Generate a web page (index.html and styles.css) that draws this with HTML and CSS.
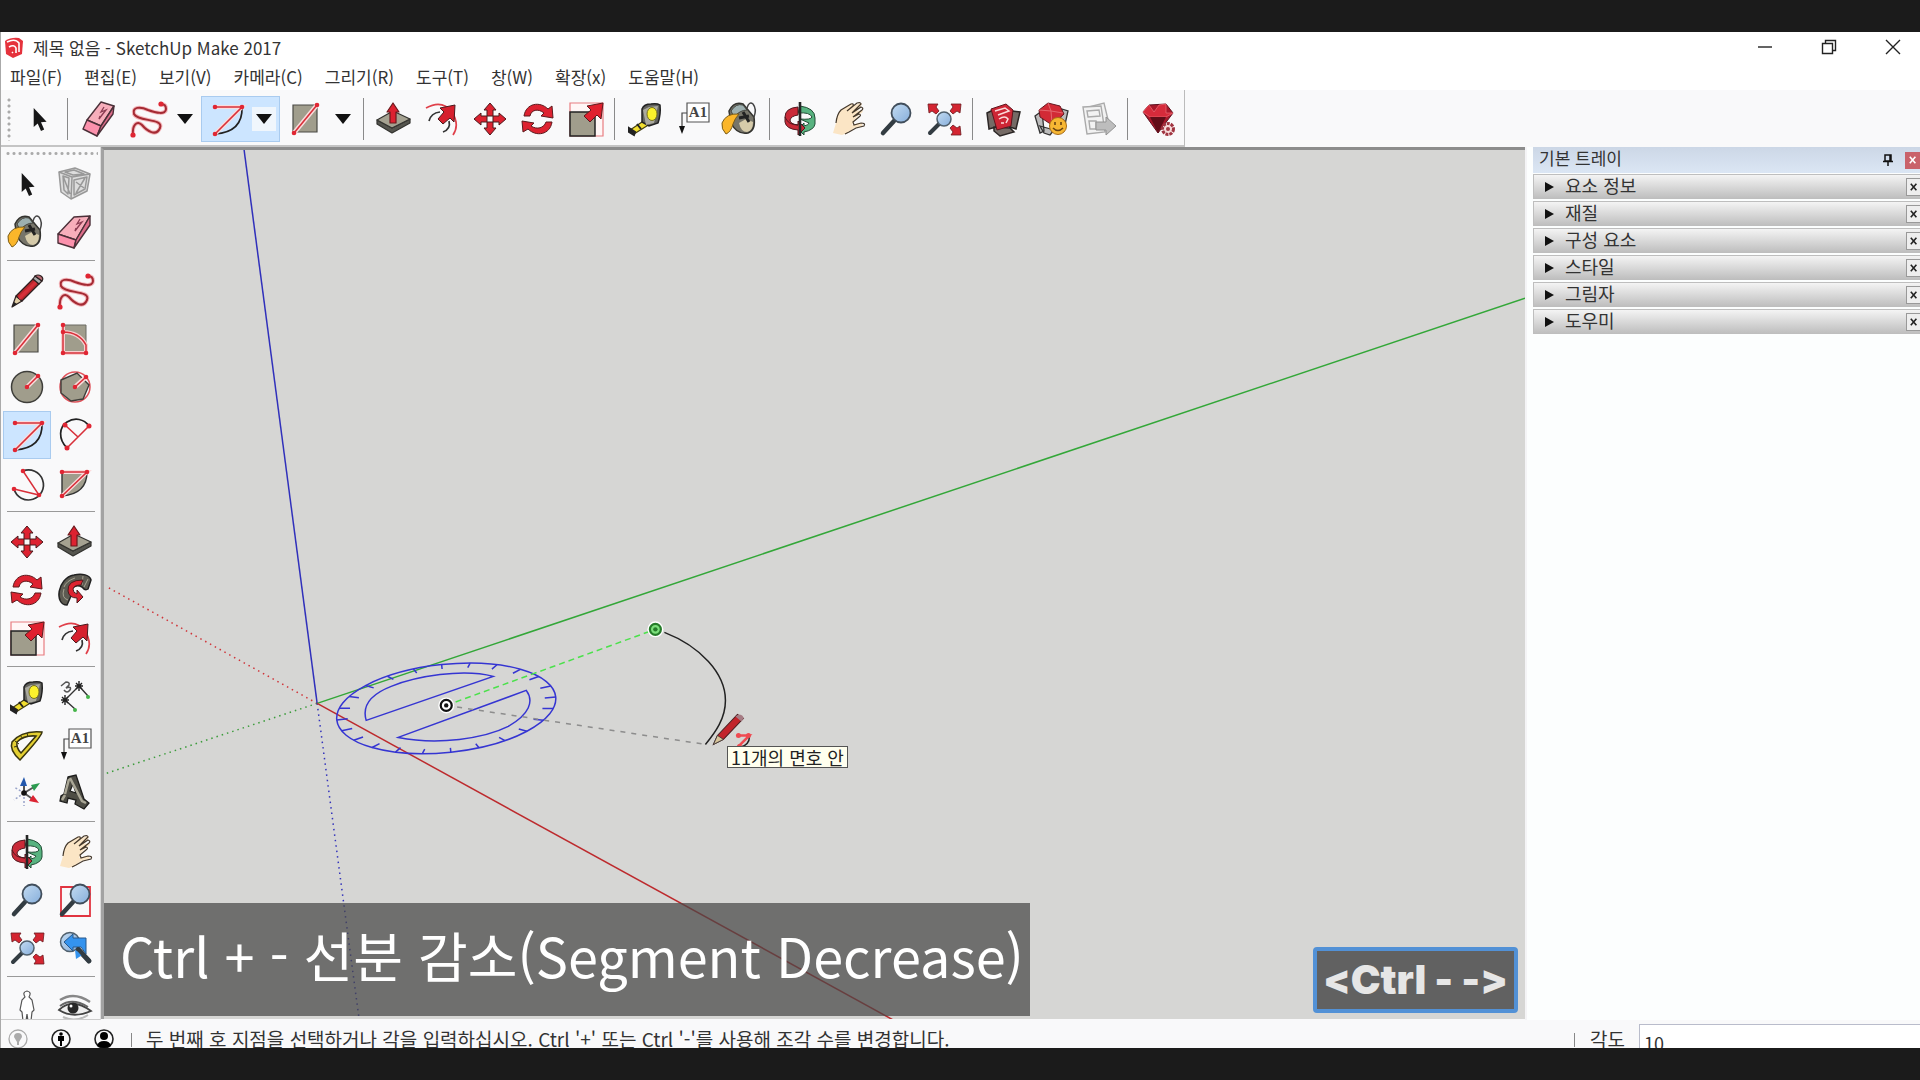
FILE: index.html
```
<!DOCTYPE html>
<html lang="ko">
<head>
<meta charset="utf-8">
<meta name="viewport" content="width=device-width, initial-scale=1">
<title>제목 없음 - SketchUp Make 2017</title>
<link rel="stylesheet" href="styles.css">
</head>
<body>
<svg class="sprite" aria-hidden="true">
  <defs>
    <linearGradient id="lens" x1="0" y1="0" x2="1" y2="1"><stop offset="0" stop-color="#c4dcf2"/><stop offset="1" stop-color="#86aedb"/></linearGradient>
    <symbol id="select" viewBox="0 0 40 40"><path fill="#171717" d="M14.7 9v19l4-3.600 3.300 7.500 3.200-1.400-3.200-7.200 5.600-.6z"/></symbol>
    <symbol id="component" viewBox="0 0 40 40"><g fill="#ddd" stroke="#999" stroke-width="1.500" stroke-linejoin="round"><path d="M4 8l16-4 15 6-3 17-16 8-10-7z"/><path fill="none" d="M4 8l13 5 18-3M17 13l-1 22M8 12l6 2-1 16-4-4zM19 16l13-3-2 12-11 6zM10 8l9-2 10 4-11 1zM8 12l7 18M21 18l8 6M30 14l-9 15"/></g></symbol>
    <symbol id="paint" viewBox="0 0 40 40"><path d="M8 12Q13 2 22 5L33 18Q35 31 27 34 16 36 10 24z" fill="#77756a" stroke="#33332f" stroke-width="1.500"/><path d="M10 12q5-8 12-6l4 5q-7 0-13 7z" fill="#9db0b0" stroke="#44443e"/><path d="M18 24l7-4 7 3q0 9-6 10-6 0-8-9z" fill="#d6cbaa"/><path d="M22 13l6 10M18 19l10-2" stroke="#222" stroke-width="3"/><path d="M26 9q2-7 6-4 4 5 1 13" fill="none" stroke="#444" stroke-width="1.500"/><path d="M18 15Q5 14 1 24q-1 6 4 11 5-2 7-10 2-6 6-10z" fill="#fbb62a" stroke="#7a5d1b"/></symbol>
    <symbol id="eraser" viewBox="0 0 40 40"><g stroke="#4b3038" stroke-width="1.400" stroke-linejoin="round"><path fill="#f7aebb" d="M19 5l16-1-14 24-18-6z"/><path fill="#fb91ac" d="M3 22l18 6-2 8-16-5z"/><path fill="#dd6d8a" d="M35 4v9L19 36l2-8z"/></g><path d="M25 7l-3 5 5-2-4 5-3 4 1-3" fill="none" stroke="#8a3c52" stroke-width="1.300"/></symbol>
    <symbol id="eraser-up" viewBox="0 0 40 40"><g stroke="#4b3038" stroke-width="1.400" stroke-linejoin="round"><path fill="#f7aebb" d="M23 3l13 4-13 20-14-6z"/><path fill="#fb91ac" d="M9 21l14 6-4 10-14-7z"/><path fill="#dd6d8a" d="M36 7l-1 8-16 22 4-10z"/></g><path d="M26 8l-3 5 5-2-4 5-3 4 1-3" fill="none" stroke="#8a3c52" stroke-width="1.300"/></symbol>
    <symbol id="pencil" viewBox="0 0 40 40"><g stroke="#2d2020" stroke-width="1.200" stroke-linejoin="round"><path fill="#e2cfa6" d="M5 36l4-11 6 5z"/><path fill="#b9272c" d="M9 25L26 8l6 5-17 17z"/><path d="M11 26L28 10l2 2-17 17z" fill="#d6303a" stroke="none"/><path fill="#aaa" d="M26 8l2-3 7 5-3 3z"/><path fill="#b96c74" d="M28 5q3-2 6 0t1 5z"/></g><path d="M5 36l2-5 3 2z" fill="#222"/></symbol>
    <symbol id="freehand" viewBox="0 0 40 40"><path d="M5 36C4 26 9 21 14 26 19 32 28 38 32 29 36 19 10 23 6 15 4 8 12 7 20 11 28 14 38 16 38 10 38 6 36 5 33 5" fill="none" stroke="#f3b6ba" stroke-width="4"/><path d="M5 36C4 26 9 21 14 26 19 32 28 38 32 29 36 19 10 23 6 15 4 8 12 7 20 11 28 14 38 16 38 10 38 6 36 5 33 5" fill="none" stroke="#a52a33" stroke-width="2"/><g fill="#e02633"><circle cx="5" cy="36" r="2.600"/><circle cx="33" cy="5" r="2.600"/></g></symbol>
    <symbol id="rect" viewBox="0 0 40 40"><path fill="#a09d8c" stroke="#4a4a45" stroke-width="1.200" d="M7 6h24v27H7z"/><path d="M8 34L31 6" stroke="#fbdcdc" stroke-width="4.500"/><path d="M8 34L31 6" stroke="#d8303a" stroke-width="1.600"/><g fill="#e02633"><circle cx="8" cy="34" r="2.300"/><circle cx="31" cy="6" r="2.300"/></g></symbol>
    <symbol id="rotrect" viewBox="0 0 40 40"><path fill="#a09d8c" stroke="#6a6a62" d="M8 6h23v28H8z"/><path d="M8 6v28h23V26Q24 13 8 13" fill="none" stroke="#f9d0d0" stroke-width="4"/><path d="M8 6v28h23V26Q24 13 8 13" fill="none" stroke="#d8303a" stroke-width="1.500"/><g fill="#e02633"><circle cx="8" cy="6" r="2.300"/><circle cx="8" cy="13" r="2.300"/><circle cx="8" cy="34" r="2.300"/><circle cx="31" cy="34" r="2.300"/></g></symbol>
    <symbol id="circle" viewBox="0 0 40 40"><circle cx="20" cy="20" r="15.500" fill="#a09d8c" stroke="#3e3e3a" stroke-width="1.500"/><path d="M20 20L31 9" stroke="#fbdcdc" stroke-width="4.500"/><path d="M20 20L31 9" stroke="#d8303a" stroke-width="1.600"/><g fill="#e02633"><circle cx="20" cy="20" r="2.300"/><circle cx="31" cy="9" r="2.300"/></g></symbol>
    <symbol id="polygon" viewBox="0 0 40 40"><circle cx="20" cy="20" r="15" fill="none" stroke="#e0525a" stroke-width="1.500"/><path d="M6 13l16-7 12 12-6 14-12 2-10-8z" fill="#a09d8c" stroke="#3e3e3a" stroke-width="1.400"/><path d="M20 20L31 10" stroke="#fbdcdc" stroke-width="4.500"/><path d="M20 20L31 10" stroke="#d8303a" stroke-width="1.600"/><g fill="#e02633"><circle cx="20" cy="20" r="2.300"/><circle cx="31" cy="10" r="2.300"/></g></symbol>
    <symbol id="arc" viewBox="0 0 40 40"><path d="M35 8Q36 33 8 35" fill="none" stroke="#222" stroke-width="1.700"/><path d="M8 8h27L8 35" fill="none" stroke="#fbdcdc" stroke-width="4"/><path d="M8 8h27L8 35" fill="none" stroke="#d8303a" stroke-width="1.600"/><g fill="#e02633"><circle cx="8" cy="8" r="2.300"/><circle cx="35" cy="8" r="2.300"/><circle cx="8" cy="35" r="2.300"/></g></symbol>
    <symbol id="arc2" viewBox="0 0 40 40"><path d="M12 33C3 24 4 12 12 7 20 2 29 4 34 11" fill="none" stroke="#222" stroke-width="1.700"/><path d="M34 11L12 33M10 10l13 12" fill="none" stroke="#d8303a" stroke-width="1.600"/><g fill="#e02633"><circle cx="10" cy="10" r="2.500"/><circle cx="34" cy="11" r="2.500"/><circle cx="12" cy="33" r="2.500"/></g></symbol>
    <symbol id="arc3" viewBox="0 0 40 40"><path d="M16 8A15 15 0 1 1 7 26" fill="none" stroke="#333" stroke-width="1.700"/><path d="M16 8l16 24-25-6" fill="none" stroke="#d8303a" stroke-width="1.500"/><g fill="#e02633"><circle cx="16" cy="8" r="2.300"/><circle cx="32" cy="32" r="2.300"/><circle cx="7" cy="26" r="2.300"/></g></symbol>
    <symbol id="pie" viewBox="0 0 40 40"><path d="M7 9h25Q32 31 7 33z" fill="#a09d8c" stroke="#333" stroke-width="1.400"/><path d="M7 9h25L7 33" fill="none" stroke="#fbdcdc" stroke-width="4"/><path d="M7 9h25L7 33" fill="none" stroke="#d8303a" stroke-width="1.600"/><g fill="#e02633"><circle cx="7" cy="9" r="2.300"/><circle cx="32" cy="9" r="2.300"/><circle cx="7" cy="33" r="2.300"/></g></symbol>
    <symbol id="move" viewBox="0 0 40 40"><g fill="#dd2230" stroke="#4a1a1d" stroke-linejoin="round"><path d="M20 4l-6 7h3v6h6v-6h3z"/><path d="M20 36l-6-7h3v-6h6v6h3zM4 20l7-6v3h6v6h-6v3zM36 20l-7-6v3h-6v6h6v3z"/></g></symbol>
    <symbol id="push" viewBox="0 0 40 40"><g stroke="#33332f" stroke-linejoin="round" stroke-width="1.200"><path fill="#55554e" d="M3 21v4l15 9 18-10v-4L18 29z"/><path fill="#a5a291" d="M3 21l16-9 17 8-18 9z"/><path fill="#dd2230" stroke="#6a1a1d" d="M19 4l-6 9h3v11h6V13h3z"/></g></symbol>
    <symbol id="rotate" viewBox="0 0 40 40"><g fill="#dd2230" stroke="#5c1a1d" stroke-linejoin="round"><path d="M6 17C8 4 22 2 30 10l4-3 1 12-12-2 3-3C20 9 13 11 12 17z"/><path d="M34 23C32 36 18 38 10 30l-5 3-1-11 12 2-3 3c6 4 13 2 15-4z"/></g></symbol>
    <symbol id="follow" viewBox="0 0 40 40"><path d="M12 35C-1 35 2 8 19 5c8-2 16 0 17 5l-3 9q-3 2-6-2c-7-4-13 2-11 9z" fill="#5d5b52" stroke="#222" stroke-width="1.500"/><path d="M13 30q-7-2-4-11M20 8q-9 3-11 9M28 6l-1 9M33 9l-4 8" stroke="#a5a291" fill="none"/><path d="M28 10Q12 10 13 21q1 7 9 7v5l6-6-6-7v4q-4-1-4-5 1-4 8-4z" fill="#dd2230" stroke="#4a1a1d"/></symbol>
    <symbol id="scale" viewBox="0 0 40 40"><path d="M4 4h33v33H4z" fill="#fff6f6" stroke="#e87c80" stroke-width="1.200"/><path d="M4 13h25v24H4z" fill="#a09d8c" stroke="#222" stroke-width="1.500"/><path d="M37 4l-16 3 4 4-7 6 6 6 7-7 4 4z" fill="#e0202e" stroke="#5c1a1d"/></symbol>
    <symbol id="offset" viewBox="0 0 40 40"><path d="M4 9Q20 0 30 13 38 26 31 36" fill="none" stroke="#e0404a" stroke-width="1.700"/><path d="M7 22q2-8 11-9M27 22q2 8-6 11" fill="none" stroke="#333" stroke-width="1.700"/><path d="M33 6L18 9l4 4-6 7 5 5 7-6 4 4z" fill="#d6202d" stroke="#4a1a1d"/></symbol>
    <symbol id="tape" viewBox="0 0 40 40"><path d="M20 21l5 4L9 35l-4-4z" fill="#f2df30" stroke="#45400f" stroke-width="1.300"/><path d="M4 29l6 4-1 3-5-3zM12 25l4 5" fill="#222" stroke="#222" stroke-width="2"/><path d="M17 10q2-5 9-5 6-1 9 1 1 9-2 18l-9 3-7-4z" fill="#63635e" stroke="#222" stroke-width="1.500"/><path d="M18 11l6-3 9-1-4 17-8 2" fill="#aaa99f"/><ellipse cx="27" cy="15" rx="5" ry="6.500" fill="#fbf12c" stroke="#77721c"/></symbol>
    <symbol id="dimension" viewBox="0 0 40 40"><path d="M10 23L24 9M10 23l10 9M24 9l9 10" stroke="#333" stroke-width="1.400"/><path d="M6 23h8M10 18v10M7 20l6 6M7 26l6-6M20 9h8M24 4v10M21 6l6 6M21 12l6-6" stroke="#222" stroke-width="1.400"/><circle cx="20" cy="33" r="2" fill="#45b549"/><circle cx="33" cy="20" r="2" fill="#45b549"/><path d="M6 9l5-4q4 0 3 3l-3 3q6-2 4 2-3 4-6 0" fill="none" stroke="#555" stroke-width="1.500"/></symbol>
    <symbol id="protractor" viewBox="0 0 40 40"><path fill-rule="evenodd" d="M13 35Q2 25 5 17 15 5 35 7q0 4-22 28zM14 28L29 11Q17 10 10 17q-1 6 4 11z" fill="#e3cf31" stroke="#39350f" stroke-width="1.500"/><path d="M8 16l4 3M13 10l3 4M20 8l1 4M7 22l4-1" stroke="#39350f"/></symbol>
    <symbol id="text" viewBox="0 0 40 40"><path d="M14 4h22v19H14z" fill="#fff" stroke="#555" stroke-width="1.200"/><text x="25" y="18" text-anchor="middle" class="glyph-a1">A1</text><path d="M14 14h-5v14" fill="none" stroke="#444" stroke-width="1.200"/><path d="M6 27h6l-3 8z" fill="#111"/></symbol>
    <symbol id="axes" viewBox="0 0 40 40"><path d="M17 20V10M17 20l10-6M17 20l10 7" stroke="#555" stroke-width="2"/><path d="M17 20v13M17 20L7 14M17 20L7 27" stroke="#98a3c9" stroke-dasharray="2 2" stroke-width="1.500"/><path d="M17 4l-4 9h7z" fill="#2358ad"/><path d="M33 10l-9 2 3 6z" fill="#2c9b50"/><path d="M32 30l-10-2 4-6z" fill="#dc2432"/><circle cx="17" cy="20" r="2.800" fill="#111"/></symbol>
    <symbol id="text3d" viewBox="0 0 40 40"><path fill-rule="evenodd" d="M13 4l8-2 8 24 5 4-5 6-9-5 1-4-8-2-1 5-7-2 1-5 3-2zM15 18l6 2-3-9z" fill="#4e4d45" stroke="#1d1d1b" stroke-width="1.300"/><path d="M15 5l12 23 4 2M10 22l-3 5M14 6l-4 15" stroke="#aaa796" stroke-width="2.500" fill="none"/></symbol>
    <symbol id="orbit" viewBox="0 0 40 40"><path d="M20 20q11 1 12-2-2-5-14-4l2-7q15 2 15 12v6q-1 6-11 8v3l-6-6 6-6v3q5-1 5-3z" fill="#58b380" stroke="#214c34"/><path d="M18 8Q5 9 5 18v5q1 7 13 8v5l7-7-7-7v4q-8-1-8-5 1-4 8-5z" fill="#c92a38" stroke="#50191f"/><path d="M5 18q3 8 13 8" fill="none" stroke="#50191f"/><path d="M20 3v34" stroke="#252525" stroke-width="2.600"/></symbol>
    <symbol id="hand" viewBox="0 0 40 40"><path d="M5 34l3-10q1-9 5-13L23 5q3-1 2 2l7-3q3 0 1 3l-4 5 5-1q2 2-2 4l-5 5-3 6 7-2q5 0 3 3l-8 2-7 5-5 2" fill="#fbe5c5"/><path d="M8 24q1-9 5-13L23 5q3-1 2 2l-6 5 10-8q4-1 4 1l-9 9 9-6q3 1 1 3l-9 7 6-3q3 1 0 3l-6 5 1 3 7-2q5 0 3 3l-8 2-7 4-4 2" fill="none" stroke="#45392c" stroke-width="1.200"/></symbol>
    <symbol id="zoom" viewBox="0 0 40 40"><path d="M18 22L7 34" stroke="#333c42" stroke-width="4.500" stroke-linecap="round"/><circle cx="25" cy="14" r="9.500" fill="url(#lens)" stroke="#414e5b" stroke-width="1.800"/></symbol>
    <symbol id="zoomwin" viewBox="0 0 40 40"><path d="M6 7h29v29H6z" fill="none" stroke="#e13440" stroke-width="1.800"/><path d="M18 22L7 34" stroke="#333c42" stroke-width="4.500" stroke-linecap="round"/><circle cx="25" cy="14" r="9.500" fill="url(#lens)" stroke="#414e5b" stroke-width="1.800"/></symbol>
    <symbol id="extents" viewBox="0 0 40 40"><path d="M15 25L6 34" stroke="#333c42" stroke-width="4" stroke-linecap="round"/><circle cx="20" cy="20" r="7" fill="url(#lens)" stroke="#50606d" stroke-width="1.500"/><g fill="#d42531" stroke="#6c1a20" stroke-width=".8"><path d="M4 5h10l-2 3 3 4-3 3-4-3-3 2zM37 5H27l2 3-3 4 3 3 4-3 3 2zM37 36H27l2-3-3-4 3-3 4 3 3-2z"/></g></symbol>
    <symbol id="previous" viewBox="0 0 40 40"><path d="M22 20L34 33" stroke="#333c42" stroke-width="5" stroke-linecap="round"/><circle cx="15" cy="14" r="9.500" fill="url(#lens)" stroke="#50606d" stroke-width="1.500"/><path d="M9 14l9-8v4h13v16l-5-7h-8v4z" fill="#3493ee" stroke="#28588b"/><path d="M20 22l9 4-8 5z" fill="#3493ee"/><path d="M23 21L34 33" stroke="#333c42" stroke-width="4" stroke-linecap="round"/></symbol>
    <symbol id="person" viewBox="0 0 40 40"><path d="M18 10q-3-5 2-6 5 1 2 6l3 3 2 10-2 2-1 9h-3l-1-7-1 7h-3l-1-9-2-2 2-10z" fill="#fff" stroke="#555" stroke-width="1.200"/><path d="M14 35l4-2M22 33l5 2" stroke="#c43440" stroke-width="2"/></symbol>
    <symbol id="eye" viewBox="0 0 40 40"><path d="M5 13q14-9 30 2" stroke="#888" stroke-width="2.500" fill="none"/><path d="M4 23Q17 10 36 24 18 32 4 23z" fill="#eee" stroke="#444" stroke-width="1.800"/><path d="M5 19q12-9 28 1" stroke="#666" stroke-width="2" fill="none"/><circle cx="18" cy="21" r="5.500" fill="#282828"/><circle cx="16" cy="19" r="1.500" fill="#fff"/><path d="M8 30q12 6 25-2" stroke="#bbb" stroke-width="2" fill="none"/></symbol>
    <symbol id="warehouse" viewBox="0 0 40 40"><path d="M4 14l8-4 1 18-7 2zM29 12l8 1-4 17-6-2zM11 28l16 1 4 4-14 4-6-5z" fill="#756b66" stroke="#2b2625" stroke-width="1.500"/><path d="M8 10l15-5 7 6-2 16-14 4z" fill="#cd2635" stroke="#5f171e"/><path d="M12 12l10-3 4 3-11 4M16 20q6-4 9 0l-2 4M18 24h3" fill="none" stroke="#fbdada" stroke-width="1.500"/></symbol>
    <symbol id="extwarehouse" viewBox="0 0 40 40"><path d="M4 17l7-5 2 20-4 2zM31 10l6 2-4 18-5-2zM9 27l14 4-4 5-6-2z" fill="#bbb" stroke="#333" stroke-width="1.300"/><path d="M8 11l9-7 12 3 4 8-12 11-12-8z" fill="#d22a36" stroke="#641820"/><path d="M8 11l12 1 12 2M17 4l3 8 1 13" fill="none" stroke="#e4676e"/><circle cx="27" cy="27" r="8.500" fill="#f7b733" stroke="#a76b15"/><path d="M24 23v3M30 23v3M22 29q5 5 10 0" stroke="#684312" stroke-width="1.600" fill="none"/></symbol>
    <symbol id="layout" viewBox="0 0 40 40"><g fill="#f2f2f2" stroke="#aaa" stroke-width="1.400"><path d="M10 8l15-4 6 25-15 4z"/><path d="M4 8l18-1 4 26-18 2z"/><path fill="none" d="M8 12l12-1 1 6-12 1zM10 22h7v8h-6z"/></g><path d="M17 23h10v-5l10 9-10 9v-5H17z" fill="#bdbdbd" stroke="#929292"/></symbol>
    <symbol id="ruby" viewBox="0 0 40 40"><path d="M5 13l6-7 17-1 7 9-15 20z" fill="#a9182a" stroke="#5c1220"/><path d="M5 13l6-7 5 7 5-7 7-1v9h7l-7 4H12z" fill="#d62b3b" stroke="#ee6d77" stroke-width=".7"/><path d="M12 18l8 16 8-16" fill="#610d18"/><circle cx="30" cy="30" r="5.500" fill="#f6dada" stroke="#a03541" stroke-width="3" stroke-dasharray="3 1"/><circle cx="30" cy="30" r="2" fill="#a53a45"/></symbol>
    <symbol id="down" viewBox="0 0 16 12"><path d="M0 1h16L8 11z" fill="#111"/></symbol>
  </defs>
</svg>

<div class="app">
  <header class="titlebar">
    <svg class="logo" viewBox="0 0 20 22" aria-hidden="true"><path d="M0 4Q6 0 14 1l4 3-1 13-9 4-7-4z" fill="#e5323c"/><path d="M2 5q8-4 12 1v9M4 10q5-3 7 1v5M7 15l1 1" fill="none" stroke="#fff" stroke-width="1.600"/></svg>
    <h1>제목 없음 - SketchUp Make 2017</h1>
    <div class="winbuttons">
      <button aria-label="최소화"><svg viewBox="0 0 16 16"><path d="M1 8h14"/></svg></button>
      <button aria-label="이전 크기로"><svg viewBox="0 0 16 16"><path d="M1.500 4.500h10v10h-10zM4.500 4V1.500h10v10H12"/></svg></button>
      <button aria-label="닫기"><svg viewBox="0 0 16 16"><path d="M1 1l14 14M15 1L1 15"/></svg></button>
    </div>
  </header>
  <nav class="menubar">
    <button>파일(F)</button><button>편집(E)</button><button>보기(V)</button><button>카메라(C)</button><button>그리기(R)</button><button>도구(T)</button><button>창(W)</button><button>확장(x)</button><button>도움말(H)</button>
  </nav>

  <div class="toolbar-row">
    <div class="toolbar" role="toolbar" aria-label="시작하기">
      <span class="grip"></span>
      <button class="tool" aria-label="선택"><svg><use href="#select"/></svg></button>
      <i class="sep"></i>
      <button class="tool" aria-label="지우기"><svg><use href="#eraser-up"/></svg></button>
      <div class="pair"><button class="tool" aria-label="자유선"><svg><use href="#freehand"/></svg></button><button class="drop" aria-label="선 도구"><svg><use href="#down"/></svg></button></div>
      <div class="pair active"><button class="tool" aria-label="호"><svg><use href="#arc"/></svg></button><button class="drop" aria-label="호 도구"><svg><use href="#down"/></svg></button></div>
      <div class="pair"><button class="tool" aria-label="직사각형"><svg><use href="#rect"/></svg></button><button class="drop" aria-label="도형 도구"><svg><use href="#down"/></svg></button></div>
      <i class="sep"></i>
      <button class="tool" aria-label="밀기/끌기"><svg><use href="#push"/></svg></button>
      <button class="tool" aria-label="오프셋"><svg><use href="#offset"/></svg></button>
      <button class="tool" aria-label="이동"><svg><use href="#move"/></svg></button>
      <button class="tool" aria-label="회전"><svg><use href="#rotate"/></svg></button>
      <button class="tool" aria-label="배율"><svg><use href="#scale"/></svg></button>
      <i class="sep"></i>
      <button class="tool" aria-label="줄자"><svg><use href="#tape"/></svg></button>
      <button class="tool" aria-label="텍스트"><svg><use href="#text"/></svg></button>
      <button class="tool" aria-label="페인트통"><svg><use href="#paint"/></svg></button>
      <i class="sep"></i>
      <button class="tool" aria-label="궤도"><svg><use href="#orbit"/></svg></button>
      <button class="tool" aria-label="이동 보기"><svg><use href="#hand"/></svg></button>
      <button class="tool" aria-label="확대/축소"><svg><use href="#zoom"/></svg></button>
      <button class="tool" aria-label="범위 확대"><svg><use href="#extents"/></svg></button>
      <i class="sep"></i>
      <button class="tool" aria-label="3D Warehouse"><svg><use href="#warehouse"/></svg></button>
      <button class="tool" aria-label="Extension Warehouse"><svg><use href="#extwarehouse"/></svg></button>
      <button class="tool" aria-label="LayOut"><svg><use href="#layout"/></svg></button>
      <i class="sep"></i>
      <button class="tool" aria-label="확장 관리자"><svg><use href="#ruby"/></svg></button>
    </div>
  </div>

  <main class="workspace">
    <aside class="toolset" aria-label="큰 도구 세트">
      <span class="hgrip"></span>
      <div class="tools">
        <button class="tool" aria-label="선택"><svg><use href="#select"/></svg></button>
        <button class="tool" aria-label="구성 요소 만들기"><svg><use href="#component"/></svg></button>
        <button class="tool" aria-label="페인트통"><svg><use href="#paint"/></svg></button>
        <button class="tool" aria-label="지우기"><svg><use href="#eraser"/></svg></button>
      </div>
      <div class="tools">
        <button class="tool" aria-label="선"><svg><use href="#pencil"/></svg></button>
        <button class="tool" aria-label="자유선"><svg><use href="#freehand"/></svg></button>
        <button class="tool" aria-label="직사각형"><svg><use href="#rect"/></svg></button>
        <button class="tool" aria-label="회전된 직사각형"><svg><use href="#rotrect"/></svg></button>
        <button class="tool" aria-label="원"><svg><use href="#circle"/></svg></button>
        <button class="tool" aria-label="다각형"><svg><use href="#polygon"/></svg></button>
        <button class="tool active" aria-label="호"><svg><use href="#arc"/></svg></button>
        <button class="tool" aria-label="2점 호"><svg><use href="#arc2"/></svg></button>
        <button class="tool" aria-label="3점 호"><svg><use href="#arc3"/></svg></button>
        <button class="tool" aria-label="파이"><svg><use href="#pie"/></svg></button>
      </div>
      <div class="tools">
        <button class="tool" aria-label="이동"><svg><use href="#move"/></svg></button>
        <button class="tool" aria-label="밀기/끌기"><svg><use href="#push"/></svg></button>
        <button class="tool" aria-label="회전"><svg><use href="#rotate"/></svg></button>
        <button class="tool" aria-label="따라가기"><svg><use href="#follow"/></svg></button>
        <button class="tool" aria-label="배율"><svg><use href="#scale"/></svg></button>
        <button class="tool" aria-label="오프셋"><svg><use href="#offset"/></svg></button>
      </div>
      <div class="tools">
        <button class="tool" aria-label="줄자"><svg><use href="#tape"/></svg></button>
        <button class="tool" aria-label="치수"><svg><use href="#dimension"/></svg></button>
        <button class="tool" aria-label="각도기"><svg><use href="#protractor"/></svg></button>
        <button class="tool" aria-label="텍스트"><svg><use href="#text"/></svg></button>
        <button class="tool" aria-label="축"><svg><use href="#axes"/></svg></button>
        <button class="tool" aria-label="3D 텍스트"><svg><use href="#text3d"/></svg></button>
      </div>
      <div class="tools">
        <button class="tool" aria-label="궤도"><svg><use href="#orbit"/></svg></button>
        <button class="tool" aria-label="이동 보기"><svg><use href="#hand"/></svg></button>
        <button class="tool" aria-label="확대/축소"><svg><use href="#zoom"/></svg></button>
        <button class="tool" aria-label="창 확대"><svg><use href="#zoomwin"/></svg></button>
        <button class="tool" aria-label="범위 확대"><svg><use href="#extents"/></svg></button>
        <button class="tool" aria-label="이전"><svg><use href="#previous"/></svg></button>
      </div>
      <div class="tools">
        <button class="tool" aria-label="카메라 배치"><svg><use href="#person"/></svg></button>
        <button class="tool" aria-label="둘러보기"><svg><use href="#eye"/></svg></button>
      </div>
    </aside>

    <section class="viewport" aria-label="모델">
      <svg class="scene" viewBox="104 150 1420 869" preserveAspectRatio="xMinYMin slice" aria-hidden="true">
        <g fill="none" stroke-width="1.500">
          <g stroke-dasharray="1.500 4">
            <path d="M317 703L106 586" stroke="#cf3338"/>
            <path d="M317 703L106 773" stroke="#3c9c3c"/>
            <path d="M317 703L359 1019" stroke="#3333bb"/>
          </g>
          <path d="M317 703L244 150" stroke="#3030bb"/>
          <path d="M317 703L1524 298" stroke="#33a738"/>
          <path d="M317 703L892 1019" stroke="#bd2a2d"/>
          <g stroke="#3535d2">
            <g transform="translate(446 708) rotate(-6) scale(110 44)">
              <circle r="1" vector-effect="non-scaling-stroke"/>
              <path vector-effect="non-scaling-stroke" d="M1 0H.9M.966.259L.869.233M.866.5L.779.45M.707.707L.636.636M.5.866L.45.779M.259.966L.233.869M0 1V.9M-.259.966L-.233.869M-.5.866L-.45.779M-.707.707L-.636.636M-.866.5L-.779.45M-.966.259L-.869.233M-1 0H-.9M-.966-.259L-.869-.233M-.866-.5L-.779-.45M-.707-.707L-.636-.636M-.5-.866L-.45-.779M-.259-.966L-.233-.869M0-1V-.9M.259-.966L.233-.869M.5-.866L.45-.779M.707-.707L.636-.636M.866-.5L.779-.45M.966-.259L.869-.233"/>
            </g>
            <path d="M366 720C361 703 373 693 391 686 416 676 462 668 493 676zM398 737L526 690C534 701 529 714 508 726 484 738 438 745 398 737z"/>
          </g>
          <path d="M446 705l209-76" stroke="#4be14b" stroke-dasharray="6 4"/>
          <path d="M446 705l259 39" stroke="#8d8d8d" stroke-dasharray="5 6"/>
          <path d="M664 632C700 646 725 673 725 700 725 718 715 732 705 744" stroke="#222"/>
        </g>
        <circle cx="446" cy="705" r="8" fill="#fff"/><circle cx="446" cy="705" r="5.500" fill="#fff" stroke="#111" stroke-width="2.200"/><circle cx="446" cy="705" r="2.200" fill="#111"/>
        <circle cx="655" cy="629" r="8" fill="#fff"/><circle cx="655" cy="629" r="5.500" fill="#7be07b" stroke="#267c2a" stroke-width="2.200"/><circle cx="655" cy="629" r="2.200" fill="#267c2a"/>
        <path d="M713 744l4-9 20-21 6 4-20 21z" fill="#c2242b" stroke="#4a2022"/><path d="M713 744l4-9 6 4z" fill="#d8c59b" stroke="#333" stroke-width=".8"/><path d="M735 716l3-2q5 0 5 4l-2 3z" fill="#a67c84"/>
        <path d="M749 736q0 9-10 11" fill="none" stroke="#222" stroke-width="1.500"/><path d="M738 735h11l-11 11" fill="none" stroke="#ef4a51" stroke-width="2.500"/><g fill="#ef4a51"><circle cx="738" cy="735" r="2.500"/><circle cx="748" cy="735" r="2.500"/><circle cx="739" cy="746" r="2.500"/></g>
      </svg>
      <span class="tooltip" role="tooltip">11개의 면호 안</span>
      <p class="caption">Ctrl + - 선분 감소(Segment Decrease)</p>
      <kbd class="keycap">&lt;Ctrl - -&gt;</kbd>
    </section>

    <aside class="tray">
      <header class="tray-head">
        <h2>기본 트레이</h2>
        <button class="pin" aria-label="자동 숨기기"><svg viewBox="0 0 12 14"><path d="M3 2h6v6H3zM8 2v6M1 8.500h10M6 9v4" fill="none" stroke="#111" stroke-width="1.500"/></svg></button>
        <button class="tray-close" aria-label="닫기"><svg viewBox="0 0 10 10"><path d="M1 1l7 8M8 1L1 9"/></svg></button>
      </header>
      <div class="panel"><button class="expand">요소 정보</button><button class="x" aria-label="닫기"><svg viewBox="0 0 10 10"><path d="M1 1l7 8M8 1L1 9"/></svg></button></div>
      <div class="panel"><button class="expand">재질</button><button class="x" aria-label="닫기"><svg viewBox="0 0 10 10"><path d="M1 1l7 8M8 1L1 9"/></svg></button></div>
      <div class="panel"><button class="expand">구성 요소</button><button class="x" aria-label="닫기"><svg viewBox="0 0 10 10"><path d="M1 1l7 8M8 1L1 9"/></svg></button></div>
      <div class="panel"><button class="expand">스타일</button><button class="x" aria-label="닫기"><svg viewBox="0 0 10 10"><path d="M1 1l7 8M8 1L1 9"/></svg></button></div>
      <div class="panel"><button class="expand">그림자</button><button class="x" aria-label="닫기"><svg viewBox="0 0 10 10"><path d="M1 1l7 8M8 1L1 9"/></svg></button></div>
      <div class="panel"><button class="expand">도우미</button><button class="x" aria-label="닫기"><svg viewBox="0 0 10 10"><path d="M1 1l7 8M8 1L1 9"/></svg></button></div>
    </aside>
  </main>

  <footer class="status">
    <button class="info" aria-label="지리적 위치"><svg viewBox="0 0 20 20"><circle cx="10" cy="10" r="9" fill="none" stroke="#aaa" stroke-width="1.300"/><path d="M10 4q4 0 4 4l-3 5v3H9v-3L6 8q0-4 4-4z" fill="#aaa"/></svg></button>
    <button class="info" aria-label="크레딧"><svg viewBox="0 0 20 20"><circle cx="10" cy="10" r="9" fill="none" stroke="#222" stroke-width="1.600"/><circle cx="10" cy="5" r="1.800"/><path d="M7 7h6v5h-2v5H9v-5H7z"/></svg></button>
    <button class="info" aria-label="로그인"><svg viewBox="0 0 20 20"><circle cx="10" cy="10" r="9" fill="none" stroke="#222" stroke-width="1.600"/><circle cx="10" cy="7" r="4"/><path d="M3 17q1-5 7-5t7 5q-7 4-14 0z"/></svg></button>
    <i class="bar"></i>
    <p>두 번째 호 지점을 선택하거나 각을 입력하십시오. Ctrl '+' 또는 Ctrl '-'를 사용해 조각 수를 변경합니다.</p>
    <i class="bar"></i>
    <label for="angle">각도</label>
    <input id="angle" type="text" value="10">
  </footer>
</div>
</body>
</html>
```
FILE: styles.css
```
* { box-sizing: border-box; }

body {
  margin: 0;
  padding: 32px 0;
  height: 100vh;
  display: flex;
  background: #1b1b1b;
  color: #333;
  font-family: "Noto Sans CJK KR", "Noto Sans", sans-serif;
  font-size: 17px;
  line-height: 24px;
}

button {
  margin: 0;
  padding: 0;
  border: 0;
  background: none;
  color: inherit;
  font: inherit;
}

h1, h2, p { margin: 0; font: inherit; }

svg { display: block; }

.sprite { position: absolute; width: 0; height: 0; }
.glyph-a1 { font: bold 15px "Liberation Serif", serif; fill: #444; }

.app {
  flex: 1;
  min-width: 0;
  display: flex;
  flex-direction: column;
  overflow: hidden;
  background: #f9f9fa;
  border-left: 1px solid #aaa;
}

/* Title and menus */
.titlebar {
  display: flex;
  align-items: center;
  height: 32px;
  padding: 0 19px 0 4px;
  background: #fff;
}
.logo { width: 20px; height: 22px; margin-right: 8px; }
.titlebar h1 { flex: 1; }
.winbuttons { display: flex; gap: 48px; padding-bottom: 2px; }
.winbuttons svg { width: 16px; height: 16px; fill: none; stroke: #222; stroke-width: 1.400; }

.menubar {
  display: flex;
  gap: 22px;
  height: 26px;
  padding-left: 9px;
  background: #fff;
  line-height: 26px;
}

/* Top toolbar */
.toolbar-row { display: flex; height: 57px; }
.toolbar {
  display: flex;
  align-items: center;
  padding: 2px 2px 0 6px;
  border-right: 1px solid #bbb;
  border-bottom: 2px solid #c4c4c4;
}
.grip { width: 8px; height: 44px; background: radial-gradient(circle, #aaa 1px, transparent 2px) 0 0 / 4px 6px repeat-y; }
.tool { width: 48px; height: 48px; display: grid; place-items: center; }
.tool svg { width: 40px; height: 40px; }
.sep { width: 1px; height: 42px; margin: 0 6px 0 4px; background: #8a8a8a; }
.pair { display: flex; align-items: center; height: 46px; width: 79px; }
.pair .tool { width: 51px; }
.drop { width: 24px; height: 24px; display: grid; place-items: center; }
.drop svg { width: 16px; height: 12px; }
.pair.active { background: #cce5ff; outline: 1px solid #a9cbef; outline-offset: -1px; }
.pair.active .drop { background: #f0f6fc; }

/* Work area */
.workspace { flex: 1; min-height: 0; display: flex; }
.toolset {
  width: 100px;
  flex: none;
  overflow: hidden;
  padding: 4px 0 0 2px;
  border-right: 1px solid #ddd;
  border-bottom: 1px solid #ccc;
}
.hgrip { display: block; height: 5px; margin: 0 2px 4px; background: radial-gradient(circle, #aaa 1px, transparent 2px) 0 0 / 6px 5px repeat-x; }
.tools { display: grid; grid-template-columns: 48px 48px; }
.tools + .tools::before { content: ""; grid-column: 1 / -1; height: 1px; margin: 4px 4px 6px; background: #999; }
.tool.active { background: #cce5ff; outline: 1px solid #a9cbef; outline-offset: -1px; }

.viewport {
  flex: 1;
  min-width: 0;
  position: relative;
  overflow: hidden;
  border: solid #8c8c8c;
  border-width: 3px 0 0 3px;
  border-left-color: #a2a2a2;
  margin-bottom: 1px;
  background: #d6d6d4;
}
.scene { width: 100%; height: 100%; }
.tooltip {
  position: absolute;
  left: 623px;
  top: 596px;
  padding: 0 3px;
  border: 1px solid #555;
  background: #ffffee;
  color: #222;
  font-size: 18px;
  line-height: 20px;
}
.caption {
  position: absolute;
  left: 0;
  bottom: 3px;
  padding: 0 6px 10px 16px;
  background: rgba(70, 70, 70, .72);
  color: #fff;
  font-size: 54px;
  font-weight: 400;
  line-height: 103px;
  white-space: nowrap;
}
.keycap {
  position: absolute;
  right: 7px;
  bottom: 6px;
  padding: 0 6px;
  border: 4px solid #5291d6;
  border-radius: 4px;
  background: #616161;
  color: #e6e6e6;
  font: 900 40px/58px Inter, sans-serif;
  font-feature-settings: "calt" 0;
}

/* Tray */
.tray {
  width: 395px;
  flex: none;
  padding-left: 6px;
  background: #fcfefe;
  border-left: 2px solid #f4f4f6;
}
.tray-head {
  display: flex;
  align-items: center;
  height: 26px;
  padding-left: 6px;
  margin-bottom: 1px;
  background: linear-gradient(#ccd7e6, #dbe6f4);
}
.tray-head h2 { flex: 1; height: 26px; font-size: 17px; line-height: 22px; }
.pin { width: 12px; margin-right: 11px; }
.pin svg { width: 12px; height: 14px; }
.tray-close { width: 15px; height: 17px; background: #c9626a; display: grid; place-items: center; }
.tray-close svg, .x svg { width: 8px; height: 8px; fill: none; stroke: #222; stroke-width: 2; }
.tray-close svg { stroke: #fff; }
.panel {
  display: flex;
  height: 25px;
  margin-bottom: 2px;
  border: solid #bebebe;
  border-width: 1px 0 1px 1px;
  background: linear-gradient(#f4f4f4, #bfbfbf);
}
.expand { flex: 1; display: flex; gap: 11px; padding-left: 11px; font-size: 18px; line-height: 20px; }
.expand::before { content: ""; margin-top: 7px; border-left: 9px solid #111; border-top: 5px solid transparent; border-bottom: 5px solid transparent; height: 0; }
.x { width: 14px; height: 18px; margin-top: 3px; border: 1px solid #999; border-right: 0; background: #eee; display: grid; place-items: center; }

/* Status bar */
.status {
  display: flex;
  align-items: flex-start;
  height: 28px;
  flex: none;
  overflow: hidden;
  padding-left: 7px;
  font-size: 19px;
  line-height: 38px;
}
.info { width: 20px; height: 20px; margin: 9px 23px 0 0; }
.info svg { width: 20px; height: 20px; }
.bar { width: 1px; height: 14px; margin-top: 13px; background: #888; }
.info + .bar { margin-right: 14px; margin-left: -6px; }
.status p { flex: 1; white-space: nowrap; }
.status label { margin: 0 14px 0 15px; }
.status input {
  width: 281px;
  height: 36px;
  margin-top: 4px;
  padding: 0 4px;
  border: solid #b9bccb;
  border-width: 1px 0 0 1px;
  background: #fff;
  color: #333;
  font: inherit;
  font-size: 18px;
}
```
